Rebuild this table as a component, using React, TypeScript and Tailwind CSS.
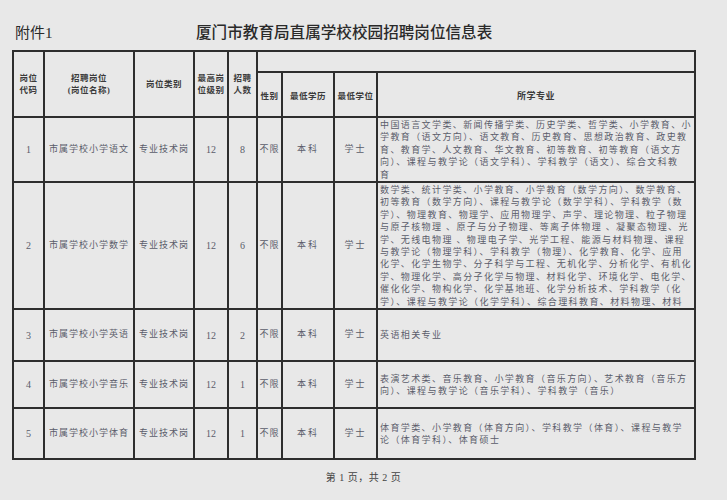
import React from 'react';

type Row = {
  code: string;
  name: string;
  level: string;
  num: string;
  height: string;
  align: 'top' | 'middle';
  lines: string[];
};

const rows: Row[] = [
  {
    code: '1',
    name: '市属学校小学语文',
    level: '12',
    num: '8',
    height: 'h-[62px]',
    align: 'top',
    lines: [
      '中国语言文学类、新闻传播学类、历史学类、哲学类、小学教育、小',
      '学教育（语文方向）、语文教育、历史教育、思想政治教育、政史教',
      '育、教育学、人文教育、华文教育、初等教育、初等教育（语文方',
      '向）、课程与教学论（语文学科）、学科教学（语文）、综合文科教',
      '育',
    ],
  },
  {
    code: '2',
    name: '市属学校小学数学',
    level: '12',
    num: '6',
    height: 'h-[126px]',
    align: 'top',
    lines: [
      '数学类、统计学类、小学教育、小学教育（数学方向）、数学教育、',
      '初等教育（数学方向）、课程与教学论（数学学科）、学科教学（数',
      '学）、物理教育、物理学、应用物理学、声学、理论物理、粒子物理',
      '与原子核物理 、原子与分子物理、等离子体物理 、凝聚态物理、光',
      '学、无线电物理 、物理电子学、光学工程、能源与材料物理、课程',
      '与教学论（物理学科）、学科教学（物理）、化学教育、化学、应用',
      '化学、化学生物学、分子科学与工程、无机化学、分析化学、有机化',
      '学、物理化学、高分子化学与物理、材料化学、环境化学、电化学、',
      '催化化学、物构化学、化学基地班、化学分析技术、学科教学（化',
      '学）、课程与教学论（化学学科）、综合理科教育、材料物理、材料',
    ],
  },
  {
    code: '3',
    name: '市属学校小学英语',
    level: '12',
    num: '2',
    height: 'h-[52px]',
    align: 'middle',
    lines: ['英语相关专业'],
  },
  {
    code: '4',
    name: '市属学校小学音乐',
    level: '12',
    num: '1',
    height: 'h-[47px]',
    align: 'middle',
    lines: [
      '表演艺术类、音乐教育、小学教育（音乐方向）、艺术教育（音乐方',
      '向）、课程与教学论（音乐学科）、学科教学（音乐）',
    ],
  },
  {
    code: '5',
    name: '市属学校小学体育',
    level: '12',
    num: '1',
    height: 'h-[51px]',
    align: 'middle',
    lines: [
      '体育学类、小学教育（体育方向）、学科教学（体育）、课程与教学',
      '论（体育学科）、体育硕士',
    ],
  },
];

const cell = 'border-2 border-[#2e2e2e] p-0';
const head = `${cell} text-center align-middle text-[8.5px] leading-[12.4px] tracking-[0.5px] font-semibold text-[#3b3b3b]`;
const body = `${cell} text-center align-middle text-[9px] tracking-[1px] text-[#5a5c6a]`;
const num = `${cell} text-center align-middle text-[10px] text-[#5a5c6a] font-['Liberation_Serif',serif]`;

export default function App() {
  return (
    <div className="w-[727px] h-[500px] overflow-hidden bg-[#e8e8e8] font-['Liberation_Serif','Noto_Sans_CJK_SC',serif]">
      {/* page header */}
      <div className="flex h-[50px] pt-[22px] pl-[15px] leading-[22px] text-[#2a2a2a]">
        <div className="w-[181px] text-[15px]">附件1</div>
        <div className="text-[15.6px] font-medium">厦门市教育局直属学校校园招聘岗位信息表</div>
      </div>

      <div className="pl-[12px]">
        <table className="table-fixed border-collapse w-[682px]">
          <colgroup>
            <col className="w-[31px]" />
            <col className="w-[90px]" />
            <col className="w-[60px]" />
            <col className="w-[34px]" />
            <col className="w-[29px]" />
            <col className="w-[25px]" />
            <col className="w-[52px]" />
            <col className="w-[43px]" />
            <col className="w-[318px]" />
          </colgroup>
          <thead>
            <tr className="h-[21px]">
              <th rowSpan={2} className={head}>
                岗位<br />代码
              </th>
              <th rowSpan={2} className={head}>
                招聘岗位<br />(岗位名称)
              </th>
              <th rowSpan={2} className={head}>岗位类别</th>
              <th rowSpan={2} className={head}>
                最高岗<br />位级别
              </th>
              <th rowSpan={2} className={head}>
                招聘<br />人数
              </th>
              <th colSpan={4} className={head}></th>
            </tr>
            <tr className="h-[45px]">
              <th className={`${head} pt-[3px]`}>性别</th>
              <th className={`${head} pt-[3px]`}>最低学历</th>
              <th className={`${head} pt-[3px]`}>最低学位</th>
              <th className={`${head} pt-[3px] text-[9px]`}>所学专业</th>
            </tr>
          </thead>
          <tbody>
            {rows.map((r) => (
              <tr key={r.code} className={r.height}>
                <td className={num}>{r.code}</td>
                <td className={body}>{r.name}</td>
                <td className={body}>专业技术岗</td>
                <td className={num}>{r.level}</td>
                <td className={num}>{r.num}</td>
                <td className={`${body} tracking-[0.5px]`}>不限</td>
                <td className={`${body} tracking-[2px]`}>本科</td>
                <td className={`${body} tracking-[2px]`}>学士</td>
                <td
                  className={`${cell} text-left text-[9px] tracking-[1.4px] text-[#5a5c6a] ${
                    r.align === 'top' ? 'align-top' : 'align-middle'
                  }`}
                >
                  <div className="px-[2px] pt-[1px] leading-[12.4px]">
                    {r.lines.map((l, i) => (
                      <div key={i} className="whitespace-nowrap">
                        {l}
                      </div>
                    ))}
                  </div>
                </td>
              </tr>
            ))}
          </tbody>
        </table>
      </div>

      <div className="mt-[10px] text-center text-[10px] tracking-[0.5px] text-[#444]">第 1 页，共 2 页</div>
    </div>
  );
}
